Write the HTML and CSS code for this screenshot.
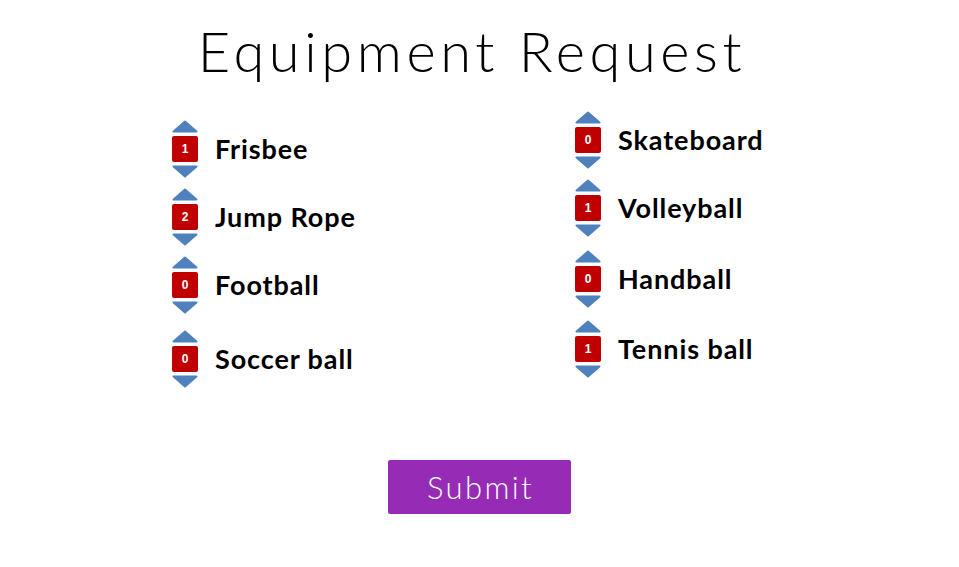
FILE: index.html
```html
<!DOCTYPE html>
<html>
<head>
<meta charset="utf-8">
<link rel="stylesheet" href="styles.css">
</head>
<body>
<div class="page">
  <h1 class="title">Equipment Request</h1>
  <div class="lists">
    <div class="col col-left">
      <div class="item">
        <div class="stepper">
          <svg class="arrow" viewBox="0 0 26 13"><path d="M13 1.5 L24.5 11.5 L1.5 11.5 Z"/></svg>
          <div class="count">1</div>
          <svg class="arrow" viewBox="0 0 26 13"><path d="M13 11.5 L24.5 1.5 L1.5 1.5 Z"/></svg>
        </div>
        <span class="label">Frisbee</span>
      </div>
      <div class="item">
        <div class="stepper">
          <svg class="arrow" viewBox="0 0 26 13"><path d="M13 1.5 L24.5 11.5 L1.5 11.5 Z"/></svg>
          <div class="count">2</div>
          <svg class="arrow" viewBox="0 0 26 13"><path d="M13 11.5 L24.5 1.5 L1.5 1.5 Z"/></svg>
        </div>
        <span class="label">Jump Rope</span>
      </div>
      <div class="item">
        <div class="stepper">
          <svg class="arrow" viewBox="0 0 26 13"><path d="M13 1.5 L24.5 11.5 L1.5 11.5 Z"/></svg>
          <div class="count">0</div>
          <svg class="arrow" viewBox="0 0 26 13"><path d="M13 11.5 L24.5 1.5 L1.5 1.5 Z"/></svg>
        </div>
        <span class="label">Football</span>
      </div>
      <div class="item gap-lg">
        <div class="stepper">
          <svg class="arrow" viewBox="0 0 26 13"><path d="M13 1.5 L24.5 11.5 L1.5 11.5 Z"/></svg>
          <div class="count">0</div>
          <svg class="arrow" viewBox="0 0 26 13"><path d="M13 11.5 L24.5 1.5 L1.5 1.5 Z"/></svg>
        </div>
        <span class="label">Soccer ball</span>
      </div>
    </div>
    <div class="col col-right">
      <div class="item">
        <div class="stepper">
          <svg class="arrow" viewBox="0 0 26 13"><path d="M13 1.5 L24.5 11.5 L1.5 11.5 Z"/></svg>
          <div class="count">0</div>
          <svg class="arrow" viewBox="0 0 26 13"><path d="M13 11.5 L24.5 1.5 L1.5 1.5 Z"/></svg>
        </div>
        <span class="label">Skateboard</span>
      </div>
      <div class="item">
        <div class="stepper">
          <svg class="arrow" viewBox="0 0 26 13"><path d="M13 1.5 L24.5 11.5 L1.5 11.5 Z"/></svg>
          <div class="count">1</div>
          <svg class="arrow" viewBox="0 0 26 13"><path d="M13 11.5 L24.5 1.5 L1.5 1.5 Z"/></svg>
        </div>
        <span class="label">Volleyball</span>
      </div>
      <div class="item gap-md">
        <div class="stepper">
          <svg class="arrow" viewBox="0 0 26 13"><path d="M13 1.5 L24.5 11.5 L1.5 11.5 Z"/></svg>
          <div class="count">0</div>
          <svg class="arrow" viewBox="0 0 26 13"><path d="M13 11.5 L24.5 1.5 L1.5 1.5 Z"/></svg>
        </div>
        <span class="label">Handball</span>
      </div>
      <div class="item gap-sm">
        <div class="stepper">
          <svg class="arrow" viewBox="0 0 26 13"><path d="M13 1.5 L24.5 11.5 L1.5 11.5 Z"/></svg>
          <div class="count">1</div>
          <svg class="arrow" viewBox="0 0 26 13"><path d="M13 11.5 L24.5 1.5 L1.5 1.5 Z"/></svg>
        </div>
        <span class="label">Tennis ball</span>
      </div>
    </div>
  </div>
  <div class="actions">
    <button class="submit" type="button">Submit</button>
  </div>
</div>
</body>
</html>
```

FILE: styles.css
```css
html, body {
  margin: 0;
  padding: 0;
  background: #ffffff;
}
body {
  width: 959px;
  height: 567px;
  overflow: hidden;
  font-family: Lato, "Open Sans", sans-serif;
  color: #000;
}
.page {
  display: flex;
  flex-direction: column;
}
.title {
  margin: 17px 0 0 0;
  padding-right: 15px;
  text-align: center;
  font-weight: 300;
  font-size: 56px;
  line-height: 68px;
  letter-spacing: 4.6px;
}
.lists {
  display: grid;
  grid-template-columns: 403px auto;
  padding-left: 172px;
  margin-top: 26px;
}
.col {
  display: flex;
  flex-direction: column;
  gap: 10px;
}
.col-left {
  padding-top: 9px;
}
.gap-lg {
  margin-top: 6px;
}
.gap-md {
  margin-top: 3px;
}
.gap-sm {
  margin-top: 2px;
}
.item {
  display: flex;
  align-items: center;
  gap: 17px;
}
.stepper {
  display: flex;
  flex-direction: column;
  align-items: center;
  width: 26px;
  gap: 3px;
}
.arrow {
  display: block;
  width: 26px;
  height: 13px;
}
.arrow path {
  fill: #4f81bd;
  stroke: #4f81bd;
  stroke-width: 2;
  stroke-linejoin: round;
}
.count {
  width: 26px;
  height: 26px;
  border-radius: 2px;
  background: #c00000;
  color: #fff;
  font-family: "Liberation Sans", Arial, sans-serif;
  font-weight: 700;
  font-size: 12px;
  line-height: 26px;
  text-align: center;
}
.label {
  font-size: 27px;
  font-weight: 700;
  line-height: 32px;
  letter-spacing: 0.9px;
}
.actions {
  display: flex;
  justify-content: center;
  margin-top: 72px;
}
.submit {
  width: 183px;
  height: 54px;
  border: none;
  border-radius: 2px;
  background: #962bb5;
  color: #fff;
  font-family: Lato, sans-serif;
  font-weight: 300;
  font-size: 31px;
  letter-spacing: 2.4px;
  padding: 0 0 0 2px;
}
```
